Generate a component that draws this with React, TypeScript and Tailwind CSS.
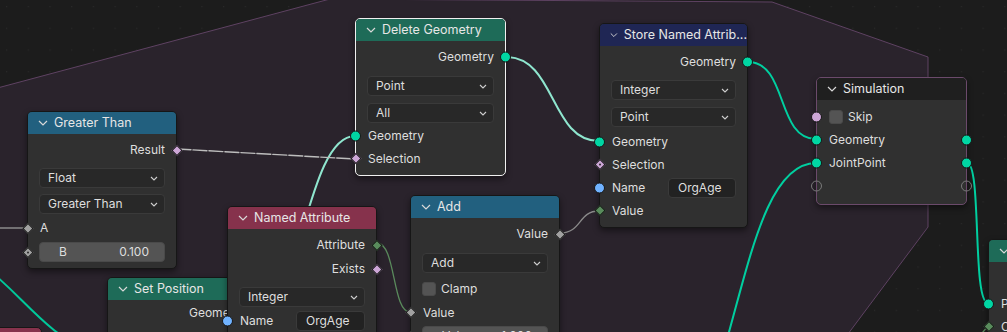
import React from "react";

type Kind = "geo" | "bool" | "str" | "int" | "float" | "empty";

const diamondBg: Record<string, string> = {
  bool: "bg-[#cca6d6]",
  int: "bg-[#598c5c]",
  float: "bg-[#a1a1a1]",
};

const circleBg: Record<string, string> = {
  geo: "bg-[#00d6a3]",
  str: "bg-[#70b2ff]",
  bool: "bg-[#cca6d6]",
};

function Socket({ kind, side, dot, round }: { kind: Kind; side: "l" | "r"; dot?: boolean; round?: boolean }) {
  const pos = side === "l" ? "left-[-6px]" : "right-[-6px]";
  if (kind === "empty") {
    return (
      <span className={`absolute ${pos} top-1/2 -translate-y-1/2 w-[11px] h-[11px] rounded-full border-[1.5px] border-[#7a7a7a]`} />
    );
  }
  if (round || kind === "geo" || kind === "str") {
    return (
      <span
        className={`absolute ${pos} top-1/2 -translate-y-1/2 w-[11px] h-[11px] rounded-full border border-[#161616] ${circleBg[kind]}`}
      />
    );
  }
  return (
    <span className={`absolute ${pos} top-1/2 -translate-y-1/2 w-[11px] h-[11px] flex items-center justify-center`}>
      <span className={`w-[8px] h-[8px] rotate-45 border border-[#161616] flex items-center justify-center ${diamondBg[kind]}`}>
        {dot && <span className="w-[2px] h-[2px] rounded-full bg-[#2a2a2a]" />}
      </span>
    </span>
  );
}

function Chevron() {
  return (
    <svg width="10" height="6" viewBox="0 0 10 6">
      <path d="M1 1 L5 5 L9 1" fill="none" stroke="#d8d8d8" strokeWidth="1.2" />
    </svg>
  );
}

function Node({
  left,
  top,
  width,
  head,
  title,
  selected,
  sim,
  children,
}: {
  left: number;
  top: number;
  width: number;
  head: string;
  title: string;
  selected?: boolean;
  sim?: boolean;
  children?: React.ReactNode;
}) {
  const border = selected ? "border-[#f0f0f0]" : sim ? "border-[#6b4a6b]" : "border-[#161616]";
  return (
    <div
      className={`absolute rounded-[5px] border ${border} bg-[#303030] shadow-[0_3px_6px_rgba(0,0,0,0.45)]`}
      style={{ left, top, width }}
    >
      <div className={`flex items-center gap-[6px] h-[22px] pl-[10px] rounded-t-[4px] text-[12.5px] text-[#e6e6e6] whitespace-nowrap overflow-hidden ${head}`}>
        <Chevron />
        <span>{title}</span>
      </div>
      <div className="flex flex-col">{children}</div>
    </div>
  );
}

function Out({ label, kind, dot }: { label: string; kind: Kind; dot?: boolean }) {
  return (
    <div className="relative flex items-center justify-end h-[22px] pr-[11px]">
      <span>{label}</span>
      <Socket kind={kind} side="r" dot={dot} />
    </div>
  );
}

function In({ label, kind, dot, round }: { label: string; kind: Kind; dot?: boolean; round?: boolean }) {
  return (
    <div className="relative flex items-center h-[23px] pl-[12px]">
      <span>{label}</span>
      <Socket kind={kind} side="l" dot={dot} round={round} />
    </div>
  );
}

function Drop({ label }: { label: string }) {
  return (
    <div className="mx-[11px] h-[20px] rounded-[4px] bg-[#282828] border border-[#3a3a3a] flex items-center justify-between pl-[8px] pr-[6px]">
      <span>{label}</span>
      <svg width="8" height="5" viewBox="0 0 8 5">
        <path d="M1 1 L4 4 L7 1" fill="none" stroke="#cfcfcf" strokeWidth="1.1" />
      </svg>
    </div>
  );
}

function NameRow() {
  return (
    <div className="relative flex items-center h-[23px] pl-[12px] pr-[11px]">
      <span className="w-[56px]">Name</span>
      <div className="flex-1 h-[20px] rounded-[4px] bg-[#222222] border border-[#3a3a3a] flex items-center pl-[9px]">OrgAge</div>
      <Socket kind="str" side="l" />
    </div>
  );
}

export default function App() {
  return (
    <div className="relative w-[1007px] h-[332px] overflow-hidden bg-[#1c1c1c] font-['Inter',sans-serif] text-[12px] text-[#dedede]">
      <svg className="absolute inset-0" width="1007" height="332">
        <defs>
          <pattern id="dots" width="21.7" height="21.7" patternUnits="userSpaceOnUse" x="6" y="6">
            <rect width="1.2" height="1.2" fill="#292929" />
          </pattern>
        </defs>
        <rect width="1007" height="332" fill="url(#dots)" />
        <polygon
          points="-10,90 330,-1 772,2 928,57 928,227 842,342 -10,342"
          fill="#2a232c"
          stroke="#5e4262"
          strokeWidth="1"
        />
        <g fill="none" strokeLinecap="round">
          <path d="M-30 255 C 20 290, 40 330, 90 352" stroke="#00c89a" strokeWidth="2" />
          <path d="M0 228 L27 228" stroke="#8a8a8a" strokeWidth="1.4" />
          <path d="M257 314 C 300 314, 306 136, 355 136" stroke="#8fe6cf" strokeWidth="2" />
          <path d="M177 149 L355 159" stroke="#bdbdbd" strokeWidth="1.4" strokeDasharray="14 2" />
          <path d="M506 57 C 556 57, 550 141, 599 141" stroke="#8fe6cf" strokeWidth="2" />
          <path d="M748 62 C 788 62, 776 139, 816 139" stroke="#00cfa0" strokeWidth="2" />
          <path d="M967 163 C 982 163, 972 303, 988 303" stroke="#00cfa0" strokeWidth="2" />
          <path d="M640 470 C 740 470, 730 163, 816 163" stroke="#00cfa0" strokeWidth="2" />
          <path d="M377 243 C 396 243, 392 312, 410 312" stroke="#5a8a5c" strokeWidth="1.3" />
          <path d="M560 233 C 582 233, 578 211, 599 211" stroke="#8a8a8a" strokeWidth="1.3" />
          <path d="M972 345 L988 326" stroke="#5a8a5c" strokeWidth="1.3" />
        </g>
      </svg>

      {/* bottom-left partial node */}
      <div className="absolute left-[-60px] top-[327px] w-[102px] h-[30px] rounded-[5px] border border-[#161616] bg-[#86324c]" />

      {/* Greater Than */}
      <Node left={27} top={111} width={150} head="bg-[#22607f]" title="Greater Than">
        <div className="h-[5px]" />
        <Out label="Result" kind="bool" />
        <div className="h-[7px]" />
        <Drop label="Float" />
        <div className="h-[6px]" />
        <Drop label="Greater Than" />
        <div className="relative flex items-center h-[22px] pl-[12px] mt-[3px]">
          <span>A</span>
          <Socket kind="float" side="l" />
        </div>
        <div className="relative h-[20px] mt-[3px] mb-[6px]">
          <div className="mx-[11px] h-[20px] rounded-[4px] bg-[#545454] border border-[#4a4a4a] flex items-center justify-between pl-[19px] pr-[15px]">
            <span>B</span>
            <span>0.100</span>
          </div>
          <Socket kind="float" side="l" dot />
        </div>
      </Node>

      {/* Set Position */}
      <Node left={107} top={277} width={150} head="bg-[#1e6b58]" title="Set Position">
        <div className="h-[2px]" />
        <Out label="Geometry" kind="geo" />
        <div className="h-[30px]" />
      </Node>

      {/* Delete Geometry */}
      <Node left={355} top={18} width={151} head="bg-[#1e6b58]" title="Delete Geometry" selected>
        <div className="h-[5px]" />
        <Out label="Geometry" kind="geo" />
        <div className="h-[8px]" />
        <Drop label="Point" />
        <div className="h-[7px]" />
        <Drop label="All" />
        <div className="h-[1px]" />
        <In label="Geometry" kind="geo" />
        <In label="Selection" kind="bool" />
        <div className="h-[5px]" />
      </Node>

      {/* Named Attribute */}
      <Node left={227} top={206} width={150} head="bg-[#86324c]" title="Named Attribute">
        <div className="h-[4px]" />
        <div className="relative flex items-center justify-end h-[24px] pr-[11px]">
          <span>Attribute</span>
          <Socket kind="int" side="r" />
        </div>
        <div className="relative flex items-center justify-end h-[24px] pr-[11px]">
          <span>Exists</span>
          <Socket kind="bool" side="r" />
        </div>
        <div className="h-[6px]" />
        <Drop label="Integer" />
        <div className="h-[2px]" />
        <NameRow />
        <div className="h-[20px]" />
      </Node>

      {/* Add */}
      <Node left={410} top={195} width={150} head="bg-[#22607f]" title="Add">
        <div className="h-[5px]" />
        <Out label="Value" kind="float" />
        <div className="h-[8px]" />
        <Drop label="Add" />
        <div className="flex items-center h-[22px] pl-[11px] mt-[5px] gap-[5px]">
          <span className="w-[14px] h-[14px] rounded-[3px] bg-[#545454] border border-[#4a4a4a]" />
          <span>Clamp</span>
        </div>
        <div className="h-[1px]" />
        <In label="Value" kind="float" />
        <div className="relative h-[20px] mt-[2px] mb-[10px]">
          <div className="mx-[11px] h-[20px] rounded-[4px] bg-[#545454] border border-[#4a4a4a] flex items-center justify-between pl-[19px] pr-[15px]">
            <span>Value</span>
            <span>1.000</span>
          </div>
          <Socket kind="float" side="l" dot />
        </div>
      </Node>

      {/* Store Named Attribute */}
      <Node left={599} top={23} width={149} head="bg-[#1f2654]" title="Store Named Attrib...">
        <div className="h-[5px]" />
        <Out label="Geometry" kind="geo" />
        <div className="h-[7px]" />
        <Drop label="Integer" />
        <div className="h-[7px]" />
        <Drop label="Point" />
        <div className="h-[3px]" />
        <In label="Geometry" kind="geo" />
        <In label="Selection" kind="bool" dot />
        <NameRow />
        <In label="Value" kind="int" />
        <div className="h-[5px]" />
      </Node>

      {/* Simulation */}
      <Node left={816} top={77} width={151} head="bg-[#1f1f1f]" title="Simulation" sim>
        <div className="h-[5px]" />
        <div className="relative flex items-center h-[23px] pl-[12px] gap-[5px]">
          <span className="w-[14px] h-[14px] rounded-[3px] bg-[#545454] border border-[#4a4a4a]" />
          <span>Skip</span>
          <Socket kind="bool" side="l" round />
        </div>
        <div className="relative flex items-center h-[23px] pl-[12px]">
          <span>Geometry</span>
          <Socket kind="geo" side="l" />
          <Socket kind="geo" side="r" />
        </div>
        <div className="relative flex items-center h-[23px] pl-[12px]">
          <span>JointPoint</span>
          <Socket kind="geo" side="l" />
          <Socket kind="geo" side="r" />
        </div>
        <div className="relative h-[23px]">
          <Socket kind="empty" side="l" />
          <Socket kind="empty" side="r" />
        </div>
        <div className="h-[7px]" />
      </Node>

      {/* right edge partial node */}
      <Node left={988} top={239} width={150} head="bg-[#1e6b58]" title="Set Position">
        <div className="h-[30px]" />
        <In label="Position" kind="geo" />
        <In label="Count" kind="int" />
      </Node>
    </div>
  );
}
